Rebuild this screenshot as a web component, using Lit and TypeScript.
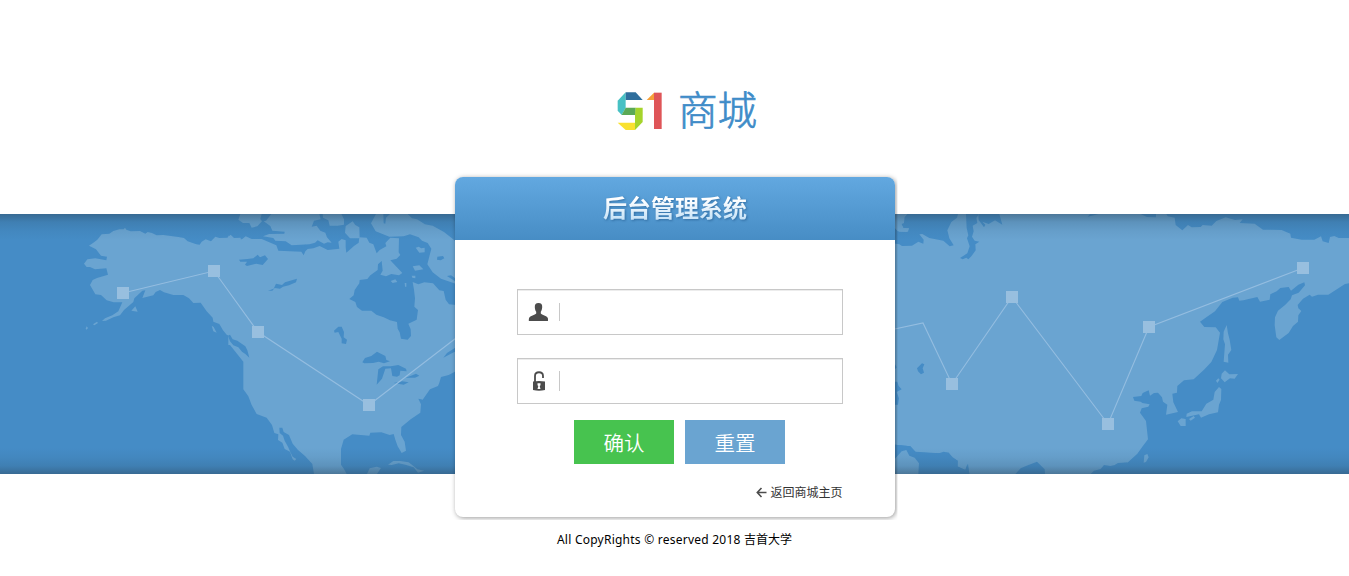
import { LitElement, html, css, svg } from "lit";
import { customElement } from "lit/decorators.js";

const NODES = [
  [123, 79], [214, 57], [258, 118], [369, 191],
  [952, 170], [1012, 83], [1108, 210], [1149, 113], [1303, 54],
];

@customElement("world-band")
export class WorldBand extends LitElement {
  static styles = css`
    :host { display: block; height: 260px; background: #458cc6; position: relative; overflow: hidden; }
    .map { display: block; width: 1349px; height: 260px; }
    .land { fill: #6aa4d1; }
    .sea { fill: #458cc6; }
    .route { fill: none; stroke: #94bde0; stroke-width: 1.1; }
    .node { fill: #98bfdf; }
    .shade {
      position: absolute; inset: 0; pointer-events: none;
      background: linear-gradient(to bottom, rgba(40,65,85,.45), rgba(40,75,100,.2) 8px, rgba(40,75,100,.07) 17px, transparent 26px, transparent 234px, rgba(40,75,100,.07) 243px, rgba(40,75,100,.2) 252px, rgba(40,65,85,.45));
    }
  `;

  render() {
    return html`
      <svg class="map" viewBox="0 0 1349 260" aria-hidden="true">
        <g transform="translate(0 -9) scale(.333333)">
          <path class="land" d="M267 122L280 113L292 104L305 88L328 86L340 78L358 73H371L375 68L379 74L392 79L420 78L436 86L443 81L456 84L470 91L490 90L535 96L552 99L563 109L589 118L599 119L605 110L617 103L633 109L646 95L658 99L682 98L692 89L702 99L722 98V455L711 438L696 425L693 418L705 422L722 438V416L708 413L693 395L680 389L669 376L658 357L640 350L638 338L620 319L602 293L580 294L567 280L550 270H520L492 262L480 255L467 261L460 271L427 279L436 256L427 257L403 280L400 291L372 315L360 331L340 337L318 347L306 348L315 340L337 331L355 319L367 292H341L320 286L303 270L286 268L270 240L278 225L291 219L324 209L319 190L285 193L270 186H260L252 176L262 163L286 160L319 166L321 155L303 152L288 133Z"/>
          <path class="land" d="M394 317L406 304L413 320ZM279 358L291 350L294 354L283 361ZM257 371L260 364L264 369L260 374ZM635 362L641 366L650 383L640 379Z"/>
        </g>
        <g transform="translate(230 -9) scale(.333333)">
          <path class="land" d="M-5 92L0 93L12 103H36L47 94L65 102L95 102L139 121L145 137L214 140L221 151L226 139L233 132L250 130L269 123L293 135L328 131L325 110L335 102L347 106V127L349 143L372 123L386 113L388 97L410 98L418 113L430 118L440 145L449 135L469 124L466 114L481 98L507 100L506 142L511 150L500 161L481 166L517 204L507 211L484 207L468 214L451 209L458 197L455 168L444 178L443 195L421 211L412 222L389 225L388 235L374 255L371 271L358 282L376 291L381 306L396 317H424L439 329L461 337L480 346L501 351L503 371L509 382L513 401L533 404L543 393L542 373L535 356L560 344L564 315L553 305L555 280L552 254L548 231L565 238L583 232L609 235L628 256L641 258L647 284L657 298L679 300V498L656 510L633 516L628 533L624 543L600 553L578 584L573 583L565 581L573 598L571 623L542 643L514 666L513 690L524 710L528 737L515 744L503 724L496 704L491 687L479 690L454 682L421 683L418 692L367 688L341 704L333 732V779L342 792L350 807H252L247 777L225 753L204 735L188 716L177 690L161 681L157 668L148 668L149 684L159 692L164 707L174 725L180 739L188 755L199 762L194 767L188 763L180 740L164 732L157 713L144 705L145 688L133 684L126 660L110 638L80 627L65 600L55 574L40 553V470L0 420H-5Z"/>
          <path class="sea" d="M-6 392L0 389L8 403L22 407L35 416L46 424L52 436L58 458L46 447L36 440L25 427L10 421L0 409Z"/>
          <path class="land" d="M31 27L25 44L39 54L58 54L65 68L82 64L96 49L91 42L95 27ZM124 27L108 47L101 49L121 63L127 77L164 80L163 86L117 87L99 94L130 99L136 107L167 109L185 121L238 118L255 113L263 106L282 116L293 112L305 113L291 97L286 83L271 77L260 62L245 65L252 47L272 43L268 27ZM278 27L279 38L295 46L299 62H323L342 59V43L334 27ZM368 49L347 63L345 83L360 100L389 100L388 67L376 60ZM438 27L423 55L437 79L478 95L521 94L540 88L566 97L576 107L593 114L604 131L592 178L608 202L633 221L679 237V111L665 99L642 81L608 62L585 58L561 43L546 40L533 27Z"/>
          <path class="sea" d="M27 164L52 162L70 160L83 149L90 157L105 151L114 162L98 180L79 176L51 183L45 179L51 170L31 170ZM114 257L131 251L138 236L156 240L165 232L201 221L198 232L177 241L159 245L150 251L134 249L127 257ZM312 377L325 365L335 365L342 381L341 397L351 404L348 417L335 415V401L325 381L314 383ZM397 472L405 459L424 453L441 440L466 453L469 465L480 469L462 475L446 470L429 474L403 475ZM440 539L445 493L459 484H482L505 480L528 491L530 499L511 497L509 511L501 515L487 513L483 490L466 491L456 521ZM491 534L517 529L536 532L521 539ZM527 518L547 511L558 506L568 512L555 518ZM640 458L651 444L679 426V438L661 447ZM622 155L639 153L643 160L632 166L621 164ZM651 213L663 211L679 222V231ZM460 27L461 55L466 56L468 38L480 27Z"/>
          <path class="land" d="M557 128L566 125L574 130L584 128V142L568 143ZM548 184L568 181L580 193L555 197ZM482 228L496 223L502 231L488 234ZM545 212L556 212L556 220L547 218ZM524 234H529V245H525ZM411 807L419 790L440 785L453 789L441 807ZM474 779L490 768L511 768L536 772L554 786L562 793L583 797L564 803L551 787L526 779L506 775L485 780Z"/>
          <path class="sea" d="M210 126L227 119L232 122L218 128Z"/>
        </g>
        <g transform="translate(890 -9) scale(.333333)">
          <path class="land" d="M0 27H712V807H465L464 793L441 770L408 783L392 790L376 807H238L232 777L226 795L202 784L203 767L183 756L176 743L161 740L147 745L91 743L76 740L61 724L0 718Z"/>
          <path class="sea" d="M0 27H204L201 38L184 51L172 76L178 100L191 121L179 124L160 107L118 99L97 87L88 88L101 104L100 116L85 110L66 122L36 123L28 118L0 113V82L15 69L23 79L50 81L57 70L40 69L34 56L42 54L43 37L52 27H0Z"/>
          <path class="land" d="M0 27H52L43 37L42 54L34 56L40 69L57 70L54 80L28 80L15 69H0Z"/>
          <path class="sea" d="M228 27H265L266 45L282 67L286 59L277 50L296 57L315 46L337 59L328 27H267L259 39L262 54L248 62L251 79L246 95L254 107L268 110L256 118L257 136L244 154L235 163L229 158L218 163L210 159L232 145L239 124L231 100L235 91L230 69ZM593 35L600 27H625L612 31ZM81 490L96 475L103 478L98 490L102 503L93 508L84 499ZM0 478H15L20 487L15 493H0ZM0 530L22 530L26 543L35 553L20 561L27 580L24 599L0 600ZM602 807L612 797L632 792L642 780L661 783L675 780L682 772L712 771V807Z"/>
          <path class="sea" d="M0 718L61 724L76 740L147 745L176 743L188 757L203 767V785L226 795L234 777L238 807H0Z"/>
          <path class="land" d="M15 807V761L35 739L49 735L58 752L74 758L87 775L85 807Z"/>
        </g>
        <g transform="translate(1115 -9) scale(.333333)">
          <path class="sea" d="M0 774H702V807H0Z"/>
          <path class="land" d="M0 27H77L96 36L123 37V27H154L158 34L179 38L182 60L202 76L219 60L230 67L257 66L263 60L290 62L304 48L332 37L360 45L383 43L374 54L419 56L444 74L500 75L526 86L528 98L560 104H598L618 94L623 109L641 114L645 96L658 93L671 99H704V234L690 237L640 269L609 269L591 275L584 269L564 281L548 300L550 310L559 318L550 331L549 350L534 363L521 384L493 405L484 397L479 361L480 337L489 317L511 299L527 283L531 271L551 263L570 241L568 232L550 239L528 257L521 246L496 249L485 259L466 268L464 284L435 290L427 276L385 286L373 287L369 277L353 278L322 291L300 319L275 336L255 350L268 366L302 367L315 383L306 435L289 471L267 494L236 523L207 526L187 543L186 563L172 566L175 592L189 621L153 629L157 599L144 590L141 577L129 563L117 564L105 572L101 556L83 564L79 573L54 576L58 587L77 590L82 594L104 598L100 605L80 610L75 623L93 648L99 703L82 725L67 746L39 772L9 774L0 779Z"/>
          <path class="land" d="M335 360L326 380L325 403L330 418L326 470L340 473L339 449L349 435L344 404L339 385ZM330 496L320 506L318 520L329 532L345 520L359 521L369 507L343 508ZM303 527L310 520L314 524L307 534ZM312 546L299 561L295 584L274 596L260 619L231 619L215 626L214 636L252 628L258 638L282 628L309 622L312 599L318 585L319 552ZM222 642L236 633L240 638L227 647ZM188 649L199 640L212 642L212 663L197 663ZM86 773L88 751L97 747L101 757L93 771Z"/>
        </g>
        <path class="route" d="M123 79L214 57L258 118L369 191L460 121M890 116L923 109L952 170L1012 83L1108 210L1149 113L1303 54"/>
        ${NODES.map(([x, y]) => svg`<rect class="node" x=${x - 6} y=${y - 6} width="12" height="12"/>`)}
      </svg>
      <div class="shade"></div>
    `;
  }
}

@customElement("app-root")
export class AppRoot extends LitElement {
  static styles = css`
    :host {
      display: block; height: 576px; overflow: hidden; background: #fff;
      font-family: "Noto Sans", "Noto Sans CJK SC", sans-serif; font-size: 12px; color: #000;
    }
    * { box-sizing: border-box; }
    .stage { display: grid; grid-template-columns: 1fr 440px 1fr; grid-template-rows: 177px 37px 260px 46px; }
    .brand { grid-area: 1 / 1 / 2 / -1; display: flex; justify-content: center; align-items: flex-start; gap: 12px; padding: 80px 0 0 24px; }
    .mark { width: 61px; height: 60px; flex: none; }
    .name {
      width: 90px; margin-top: -2px; white-space: nowrap; color: #3f8cc8;
      font: 300 39.5px/60px "Noto Sans CJK SC", sans-serif; -webkit-text-stroke: .7px #3f8cc8;
    }
    .band { grid-area: 3 / 1 / 4 / -1; }
    .card {
      grid-area: 2 / 2 / 5 / 3; z-index: 1; height: 340px; border-radius: 8px; background: #fff;
      box-shadow: 1px 1px 5px rgba(0,0,0,.4); clip-path: inset(-6px -3px -3px -6px);
    }
    .head { height: 63px; display: flex; align-items: center; justify-content: center; border-radius: 8px 8px 0 0; padding: 0 0 4px 1px; background: linear-gradient(#62a8e0, #478dc5); }
    .title {
      margin: 0; font: 700 24px/36px "Noto Sans CJK SC", sans-serif; white-space: nowrap;
      background: linear-gradient(#fff 30%, #cbe5f8 80%); background-clip: text; -webkit-background-clip: text; color: transparent;
      filter: drop-shadow(1px 1px 1px rgba(20,70,120,.5));
    }
    .form { padding: 49px 52px 0 62px; display: flex; flex-direction: column; }
    .field { height: 46px; margin-bottom: 23px; display: flex; align-items: center; border: 1px solid #c8c8c8; box-shadow: inset 0 1px 0 #ececec; }
    .field:nth-child(2) { margin-bottom: 16px; }
    .glyph { width: 42px; height: 44px; flex: none; }
    .entry { flex: 1; min-width: 0; height: 30px; border: 0; outline: 0; padding: 0 8px; background: transparent; font-size: 16px; }
    .actions { display: flex; gap: 11px; padding-left: 57px; }
    .btn { width: 100px; height: 44px; border: 0; padding: 0 0 1px 1px; color: #fff; font: 350 20.5px/42px "Noto Sans CJK SC", sans-serif; background: #6aa4d1; }
    .ok { background: #47c34f; }
    .back { display: flex; justify-content: flex-end; align-items: center; gap: 3px; margin-top: 19px; line-height: 18px; color: #333; text-decoration: none; }
    .back span { padding-top: 1px; line-height: 17px; }
    .arrow { width: 11px; height: 11px; }
    .foot { margin: 11px 0 0; line-height: 18px; text-align: center; white-space: nowrap; letter-spacing: .24px; }
    .foot span { letter-spacing: 0; }
  `;

  render() {
    return html`
      <main class="stage">
        <div class="brand">
          <svg class="mark" viewBox="0 0 183 180" role="img" aria-label="51">
            <path fill="#47c1c4" d="M38 62L62 37V84L50 105L38 92Z"/>
            <path fill="#2f6f9d" d="M62 37H92L113 60H62Z"/>
            <path fill="#5aa955" d="M62 83H92V105H50Z"/>
            <path fill="#a5d42b" d="M92 83H113V126L90 150V105Z"/>
            <path fill="#f9e12f" d="M38 128H90V150H62Z"/>
            <path fill="#f6a13a" d="M125 60L147 38V60Z"/>
            <path fill="#df5558" d="M147 38H170V147H147Z"/>
          </svg>
          <span class="name">商城</span>
        </div>
        <world-band class="band"></world-band>
        <section class="card">
          <header class="head"><h1 class="title">后台管理系统</h1></header>
          <form class="form" @submit=${(e: Event) => e.preventDefault()}>
            <label class="field">
              <svg class="glyph" viewBox="0 0 42 44">
                <path fill="#4c4c4c" d="M20.5 13c2.700 0 4 1.500 3.700 4.200-.2 2.400-.7 3.400-1.400 4.500v1.700c1 1.700 6.200 2 7 4.700.3 1 .3 2.500.1 2.900h-19c-.2-.4-.1-1.900.2-2.900.9-2.700 6-3 7.100-4.700v-1.700c-.8-1.100-1.200-2.100-1.400-4.500-.2-2.700 1-4.200 3.700-4.200Z"/>
                <path stroke="#c8c8c8" d="M41.5 13v18"/>
              </svg>
              <input class="entry" type="text" aria-label="用户名">
            </label>
            <label class="field">
              <svg class="glyph" viewBox="0 0 42 44">
                <path fill="none" stroke="#4c4c4c" stroke-width="1.8" d="M17 23v-6c0-5 8-5 8 0v2"/>
                <path fill="#4c4c4c" d="M15 22.500c4-.8 8-.8 12 0v8.500c-4 1-8 1-12 0Z"/>
                <path fill="#fff" d="M19.500 24.300h3v2l-.8.800.8 2.900h-3l.8-2.900-.8-.8Z"/>
                <path stroke="#c8c8c8" d="M41.500 12v20"/>
              </svg>
              <input class="entry" type="password" aria-label="密码">
            </label>
            <div class="actions">
              <button class="btn ok" type="submit">确认</button>
              <button class="btn" type="reset">重置</button>
            </div>
            <a class="back">
              <svg class="arrow" viewBox="0 0 11 11"><path fill="none" stroke="#4c4c4c" stroke-width="1.6" d="M5.500 1L1.300 5.500L5.500 10M1.500 5.500H10.500"/></svg>
              <span>返回商城主页</span>
            </a>
          </form>
        </section>
      </main>
      <p class="foot">All CopyRights © reserved 2018 <span>吉首大学</span></p>
    `;
  }
}
